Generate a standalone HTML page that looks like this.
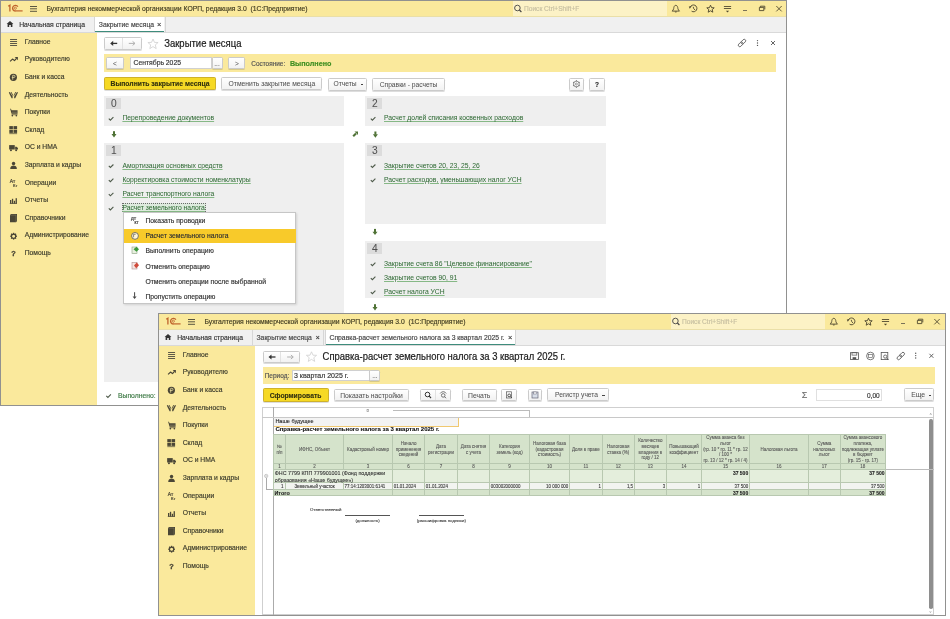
<!DOCTYPE html><html><head><meta charset="utf-8"><style>
html,body{margin:0;padding:0;background:#fff;width:950px;height:619px;overflow:hidden;position:relative;font-family:"Liberation Sans",sans-serif;}
.t{position:absolute;white-space:nowrap;line-height:1;-webkit-text-stroke:0.16px currentColor;}
.r{position:absolute;}
svg{overflow:visible;}
u{text-decoration:underline;text-underline-offset:1px;text-decoration-thickness:0.7px;text-decoration-color:#86B886;-webkit-text-stroke:0.02px currentColor;}
#root{position:absolute;left:0;top:0;width:950px;height:619px;will-change:transform;}
</style></head><body><div id="root">
<div class="r" style="left:0.00px;top:0.00px;width:787.00px;height:406.00px;background:#FFFFFF;border:1px solid #919190;box-sizing:border-box;"></div>
<div class="r" style="left:1.00px;top:1.00px;width:785.00px;height:15.50px;background:#FAE99C;"></div>
<div class="r" style="left:1.00px;top:16.00px;width:785.00px;height:1.00px;background:#EADFA8;"></div>
<div class="r" style="left:1.00px;top:17.00px;width:785.00px;height:15.00px;background:#F0F0F0;"></div>
<div class="r" style="left:1.00px;top:32.00px;width:785.00px;height:1.00px;background:#D9D9D9;"></div>
<div class="r" style="left:512.50px;top:1.00px;width:154.00px;height:15.00px;background:#FCF2C6;"></div>
<svg class="r" style="left:0.00px;top:0.00px;" width="26" height="16" viewBox="0 0 26 16"><g fill="none" stroke="#BF632C" stroke-width="1.3"><path d="M8.2 6.2 L9.9 5.1 V11.6"/><path d="M17.9 6.6 A2.9 2.9 0 1 0 15.3 11.1"/><path d="M15 10.9 H22.6" stroke-width="1.2"/><circle cx="15.3" cy="8.2" r="1.1" stroke-width="0.8"/></g></svg>
<svg class="r" style="left:0.00px;top:0.00px;" width="40" height="16" viewBox="0 0 40 16"><g fill="#5A5640"><rect x="30" y="6" width="7" height="1"/><rect x="30" y="8.3" width="7" height="1"/><rect x="30" y="10.8" width="7" height="1"/></g></svg>
<div class="t" style="left:46.50px;top:5.86px;font-size:6.8px;color:#423D22;">Бухгалтерия некоммерческой организации КОРП, редакция 3.0&nbsp;&nbsp;(1С:Предприятие)</div>
<svg class="r" style="left:512.00px;top:2.00px;" width="12" height="12" viewBox="0 0 12 12"><g transform="translate(6.00 6.60)"><circle cx="-0.6" cy="-0.6" r="2.8" fill="none" stroke="#444" stroke-width="0.9"/><path d="M1.4 1.4 L3.4 3.4" stroke="#444" stroke-width="1.1"/></g></svg>
<div class="t" style="left:524.00px;top:5.97px;font-size:6.6px;color:#C8C1A2;">Поиск Ctrl+Shift+F</div>
<svg class="r" style="left:669.00px;top:2.00px;" width="12" height="12" viewBox="0 0 12 12"><g transform="translate(6.80 6.80)"><path d="M0 -3.5 C-1.5 -3.5 -2 -1.6 -2.1 -0.2 C-2.3 1 -3 1.7 -3.7 2.3 H3.7 C3 1.7 2.3 1 2.1 -0.2 C2 -1.6 1.5 -3.5 0 -3.5 Z" fill="none" stroke="#514A30" stroke-width="0.9" stroke-linejoin="round"/><path d="M-1.1 2.6 A1.1 1.1 0 0 0 1.1 2.6 Z" fill="#514A30"/></g></svg>
<svg class="r" style="left:687.00px;top:2.00px;" width="12" height="12" viewBox="0 0 12 12"><g transform="translate(6.40 6.60)"><path d="M-3.1 -1.4 A3.4 3.4 0 1 1 -1.8 2.6" fill="none" stroke="#514A30" stroke-width="0.95"/><path d="M-4.6 -2 L-1.9 -2.4 L-3.6 0.2 Z" fill="#514A30"/><path d="M-0.2 -1.8 L0.4 0.2 L1.6 1.4" fill="none" stroke="#514A30" stroke-width="0.9"/></g></svg>
<svg class="r" style="left:704.00px;top:2.00px;" width="12" height="12" viewBox="0 0 12 12"><g transform="translate(6.50 6.80)"><path d="M0 -3.6 L1.1 -1.1 L3.7 -1 L1.7 0.8 L2.3 3.4 L0 2 L-2.3 3.4 L-1.7 0.8 L-3.7 -1 L-1.1 -1.1 Z" fill="none" stroke="#514A30" stroke-width="0.95" stroke-linejoin="round"/></g></svg>
<svg class="r" style="left:721.00px;top:2.00px;" width="12" height="12" viewBox="0 0 12 12"><g transform="translate(6.50 6.00)"><g fill="#514A30"><rect x="-3.6" y="-2" width="7.2" height="0.9"/><rect x="-3.6" y="0" width="7.2" height="0.9"/><path d="M-1.6 2.8 H1.6 L0 4.4 Z"/></g></g></svg>
<div class="r" style="left:742.80px;top:10.00px;width:4.40px;height:1.00px;background:#7A7258;"></div>
<svg class="r" style="left:756.00px;top:2.00px;" width="12" height="12" viewBox="0 0 12 12"><g transform="translate(6.00 6.40)"><path d="M-2.6 -1 H1.8 V2.2 H-2.6 Z M-1.6 -1 V-2.2 H2.8 V1" fill="none" stroke="#514A30" stroke-width="0.9"/></g></svg>
<svg class="r" style="left:773.00px;top:2.00px;" width="12" height="12" viewBox="0 0 12 12"><g transform="translate(6.00 6.70)"><path d="M-2.7 -2.7 L2.7 2.7 M2.7 -2.7 L-2.7 2.7" stroke="#514A30" stroke-width="0.9"/></g></svg>
<svg class="r" style="left:4.00px;top:18.00px;" width="12" height="12" viewBox="0 0 12 12"><g transform="translate(6.00 6.00)"><path d="M-3.4 0 L0 -3 L3.4 0 H2.4 V3 H0.8 V1 H-0.8 V3 H-2.4 V0 Z" fill="#333"/></g></svg>
<div class="t" style="left:19.20px;top:21.76px;font-size:6.8px;color:#333;">Начальная страница</div>
<div class="r" style="left:93.80px;top:17.00px;width:1.00px;height:15.00px;background:#D6D6D6;"></div>
<div class="r" style="left:94.80px;top:17.00px;width:69.70px;height:15.00px;background:#FFFFFF;"></div>
<div class="r" style="left:94.80px;top:31.00px;width:69.70px;height:1.20px;background:#3E8C7C;"></div>
<div class="t" style="left:98.80px;top:21.76px;font-size:6.8px;color:#444;">Закрытие месяца</div>
<div class="t" style="left:157.10px;top:21.11px;font-size:7.4px;color:#333;">×</div>
<div class="r" style="left:164.50px;top:17.00px;width:1.00px;height:15.00px;background:#D6D6D6;"></div>
<div class="r" style="left:1.00px;top:33.00px;width:96.00px;height:372.00px;background:#FAE99C;"></div>
<div class="t" style="left:24.70px;top:38.89px;font-size:6.75px;color:#3C3C2C;">Главное</div>
<svg class="r" style="left:7.00px;top:36.00px;" width="12" height="12" viewBox="0 0 12 12"><g transform="translate(6.55 6.00)"><g fill="#5E5A48"><rect x="-3.5" y="-3" width="7" height="1"/><rect x="-3.5" y="-1" width="7" height="1"/><rect x="-3.5" y="1" width="7" height="1"/><rect x="-3.5" y="3" width="7" height="1"/></g></g></svg>
<div class="t" style="left:24.70px;top:56.49px;font-size:6.75px;color:#3C3C2C;">Руководителю</div>
<svg class="r" style="left:7.00px;top:53.00px;" width="12" height="12" viewBox="0 0 12 12"><g transform="translate(6.90 6.45)"><g stroke="#4A4636" stroke-width="1.2" fill="none" stroke-linejoin="round"><path d="M-3.8 2 L-1.4 -0.4 L0.6 1.2 L2.6 -1"/></g><path d="M0.8 -2.4 L4 -2.4 L4 0.8 Z" fill="#4A4636"/></g></svg>
<div class="t" style="left:24.70px;top:74.09px;font-size:6.75px;color:#3C3C2C;">Банк и касса</div>
<svg class="r" style="left:7.00px;top:71.00px;" width="12" height="12" viewBox="0 0 12 12"><g transform="translate(6.40 6.30)"><circle r="3.6" fill="#4A4636"/><g stroke="#E8DCA0" stroke-width="0.8" fill="none"><path d="M-0.7 2.4 V-2 H0.5 A1.1 1.1 0 0 1 0.5 0.2 H-1.6"/></g></g></svg>
<div class="t" style="left:24.70px;top:91.69px;font-size:6.75px;color:#3C3C2C;">Деятельность</div>
<svg class="r" style="left:7.00px;top:89.00px;" width="12" height="12" viewBox="0 0 12 12"><g transform="translate(6.40 6.20)"><g fill="#4A4636"><path d="M-4.6 -2.8 L-3.6 -3.2 L-0.8 1.4 L-0.8 3 L-1.8 3 Z"/><path d="M4.6 -2.8 L3.6 -3.2 L0.8 1.4 L0.8 3 L1.8 3 Z"/><path d="M-2.8 -3 L-2 -3.2 L-0.2 0 L-0.6 0.8 Z"/><path d="M2.8 -3 L2 -3.2 L0.2 0 L0.6 0.8 Z"/></g></g></svg>
<div class="t" style="left:24.70px;top:109.28px;font-size:6.75px;color:#3C3C2C;">Покупки</div>
<svg class="r" style="left:7.00px;top:106.00px;" width="12" height="12" viewBox="0 0 12 12"><g transform="translate(6.95 6.45)"><g fill="#4A4636"><path d="M-3.8 -3.6 L-3 -3.6 L-2.4 -2.2 H3.6 V1.4 H-2.4 Z"/><rect x="-2.4" y="2" width="6" height="0.7"/><circle cx="-1.6" cy="3.2" r="0.8"/><circle cx="2.4" cy="3.2" r="0.8"/></g><rect x="-2" y="-0.6" width="5.4" height="0.5" fill="#E8DCA0" opacity="0.6"/></g></svg>
<div class="t" style="left:24.70px;top:126.88px;font-size:6.75px;color:#3C3C2C;">Склад</div>
<svg class="r" style="left:7.00px;top:124.00px;" width="12" height="12" viewBox="0 0 12 12"><g transform="translate(6.20 6.00)"><g fill="#4A4636"><rect x="-3.9" y="-3.9" width="3.6" height="3.1"/><rect x="0.3" y="-3.9" width="3.6" height="3.1"/><rect x="-3.9" y="-0.2" width="3.6" height="3.1"/><rect x="0.3" y="-0.2" width="3.6" height="3.1"/><rect x="-3.9" y="3.4" width="7.8" height="0.7"/></g></g></svg>
<div class="t" style="left:24.70px;top:144.49px;font-size:6.75px;color:#3C3C2C;">ОС и НМА</div>
<svg class="r" style="left:7.00px;top:142.00px;" width="12" height="12" viewBox="0 0 12 12"><g transform="translate(6.55 6.10)"><g fill="#4A4636"><rect x="-4.4" y="-3" width="5.6" height="4.4"/><path d="M1.6 -1.4 H3 L4.4 0 V1.4 H1.6 Z"/><circle cx="-2.6" cy="2.2" r="1"/><circle cx="2.6" cy="2.2" r="1"/></g></g></svg>
<div class="t" style="left:24.70px;top:162.09px;font-size:6.75px;color:#3C3C2C;">Зарплата и кадры</div>
<svg class="r" style="left:7.00px;top:159.00px;" width="12" height="12" viewBox="0 0 12 12"><g transform="translate(6.55 6.50)"><g fill="#4A4636"><ellipse cx="0" cy="-1.9" rx="1.7" ry="1.8"/><path d="M-3.3 3.6 C-3.3 0.7 -1.6 0.3 0 0.3 C1.6 0.3 3.3 0.7 3.3 3.6 Z"/></g></g></svg>
<div class="t" style="left:24.70px;top:179.69px;font-size:6.75px;color:#3C3C2C;">Операции</div>
<svg class="r" style="left:7.00px;top:176.00px;" width="12" height="12" viewBox="0 0 12 12"><g transform="translate(6.30 6.70)"><text x="-3.6" y="0.2" font-size="5" fill="#4A4636" font-family="Liberation Sans" stroke="#4A4636" stroke-width="0.2">Ат</text><text x="-0.2" y="4.2" font-size="4.2" fill="#4A4636" font-family="Liberation Sans" stroke="#4A4636" stroke-width="0.2">Кт</text></g></svg>
<div class="t" style="left:24.70px;top:197.28px;font-size:6.75px;color:#3C3C2C;">Отчеты</div>
<svg class="r" style="left:7.00px;top:195.00px;" width="12" height="12" viewBox="0 0 12 12"><g transform="translate(6.40 6.00)"><g fill="#4A4636"><rect x="-3.4" y="-1" width="1.3" height="3.6"/><rect x="-1.5" y="-2.2" width="1.3" height="4.8"/><rect x="0.4" y="-0.2" width="1.3" height="2.8"/><rect x="2.2" y="-2.8" width="1.3" height="5.4"/><rect x="-3.6" y="2.3" width="7.2" height="0.7"/></g></g></svg>
<div class="t" style="left:24.70px;top:214.88px;font-size:6.75px;color:#3C3C2C;">Справочники</div>
<svg class="r" style="left:7.00px;top:212.00px;" width="12" height="12" viewBox="0 0 12 12"><g transform="translate(6.40 6.10)"><g fill="#4A4636"><path d="M-3.4 -3 L-2.4 -4 H3.6 V3.2 L2.6 4.2 H-3.4 Z"/></g><path d="M-3.4 -3 H2.6 V4.2" stroke="#E8DCA0" stroke-width="0.4" fill="none" opacity="0.5"/></g></svg>
<div class="t" style="left:24.70px;top:232.49px;font-size:6.75px;color:#3C3C2C;">Администрирование</div>
<svg class="r" style="left:7.00px;top:230.00px;" width="12" height="12" viewBox="0 0 12 12"><g transform="translate(6.60 6.20)"><g fill="#4A4636"><rect x="-0.65" y="-3.4" width="1.3" height="1.6" transform="rotate(0)"/><rect x="-0.65" y="-3.4" width="1.3" height="1.6" transform="rotate(45)"/><rect x="-0.65" y="-3.4" width="1.3" height="1.6" transform="rotate(90)"/><rect x="-0.65" y="-3.4" width="1.3" height="1.6" transform="rotate(135)"/><rect x="-0.65" y="-3.4" width="1.3" height="1.6" transform="rotate(180)"/><rect x="-0.65" y="-3.4" width="1.3" height="1.6" transform="rotate(225)"/><rect x="-0.65" y="-3.4" width="1.3" height="1.6" transform="rotate(270)"/><rect x="-0.65" y="-3.4" width="1.3" height="1.6" transform="rotate(315)"/></g><circle r="2.1" fill="none" stroke="#4A4636" stroke-width="1.1"/></g></svg>
<div class="t" style="left:24.70px;top:250.09px;font-size:6.75px;color:#3C3C2C;">Помощь</div>
<svg class="r" style="left:7.00px;top:247.00px;" width="12" height="12" viewBox="0 0 12 12"><g transform="translate(6.60 6.20)"><text x="0" y="2.6" text-anchor="middle" font-size="7.4" font-weight="bold" fill="#4A4636" font-family="Liberation Sans" stroke="#4A4636" stroke-width="0.3">?</text></g></svg>
<svg class="r" style="left:736.00px;top:37.00px;" width="12" height="12" viewBox="0 0 12 12"><g transform="translate(6.00 6.00)"><g transform="rotate(-45)" fill="none" stroke="#5A5A5A" stroke-width="0.85"><rect x="-4.6" y="-1.5" width="5.4" height="3" rx="1.5"/><rect x="-0.8" y="-1.5" width="5.4" height="3" rx="1.5"/></g></g></svg>
<svg class="r" style="left:751.00px;top:37.00px;" width="12" height="12" viewBox="0 0 12 12"><g transform="translate(6.50 6.00)"><g fill="#555"><circle cy="-2.4" r="0.7"/><circle cy="0" r="0.7"/><circle cy="2.4" r="0.7"/></g></g></svg>
<svg class="r" style="left:767.00px;top:37.00px;" width="12" height="12" viewBox="0 0 12 12"><g transform="translate(6.00 6.00)"><path d="M-2.0 -2.0 L2.0 2.0 M2.0 -2.0 L-2.0 2.0" stroke="#555" stroke-width="0.9"/></g></svg>
<div class="r" style="left:104.20px;top:37.20px;width:37.50px;height:12.50px;background:linear-gradient(#FFFFFF,#F2F2F2);border:1px solid #CBCBCB;box-sizing:border-box;border-radius:1.5px;box-shadow:0 0.8px 0.6px rgba(0,0,0,0.18);"></div>
<div class="r" style="left:122.00px;top:38.20px;width:0.80px;height:10.50px;background:#E2E2E2;"></div>
<svg class="r" style="left:107.00px;top:37.00px;" width="12" height="12" viewBox="0 0 12 12"><g transform="translate(6.80 6.40)"><path d="M3.4 0 H-2" stroke="#333" stroke-width="1.3"/><path d="M-3.6 0 L-0.6 -2.6 V2.6 Z" fill="#333"/></g></svg>
<svg class="r" style="left:126.00px;top:37.00px;" width="12" height="12" viewBox="0 0 12 12"><g transform="translate(6.20 6.40)"><path d="M-3.4 0 H2.4 M0.4 -2 L2.8 0 L0.4 2" stroke="#A8A8A8" stroke-width="0.9" fill="none"/></g></svg>
<svg class="r" style="left:147.00px;top:38.00px;" width="12" height="12" viewBox="0 0 12 12"><g transform="translate(6.00 6.00)"><path d="M0 -5 L1.5 -1.6 L5.1 -1.5 L2.3 0.9 L3.2 4.6 L0 2.6 L-3.2 4.6 L-2.3 0.9 L-5.1 -1.5 L-1.5 -1.6 Z" fill="none" stroke="#CFCFCF" stroke-width="0.8" stroke-linejoin="round"/></g></svg>
<div class="t" style="left:164.20px;top:38.76px;font-size:9.5px;color:#1A1A1A;-webkit-text-stroke:0.18px currentColor;transform:scaleY(1.14);transform-origin:0 8.04px;">Закрытие месяца</div>
<div class="r" style="left:104.00px;top:54.00px;width:672.00px;height:18.00px;background:#FAE99C;"></div>
<div class="r" style="left:106.00px;top:57.20px;width:18.00px;height:12.00px;background:linear-gradient(#FFFFFF,#F2F2F2);border:1px solid #CBCBCB;box-sizing:border-box;border-radius:1.5px;box-shadow:0 0.8px 0.6px rgba(0,0,0,0.18);"></div>
<div class="t" style="left:106.00px;top:60.93px;width:18.00px;text-align:center;font-size:6.5px;color:#505050;-webkit-text-stroke:0.03px currentColor;">&lt;</div>
<div class="r" style="left:130.00px;top:57.20px;width:82.00px;height:12.00px;background:#FFFFFF;border:1px solid #D0D0D0;box-sizing:border-box;"></div>
<div class="t" style="left:133.50px;top:60.46px;font-size:6.8px;color:#333;">Сентябрь 2025</div>
<div class="r" style="left:211.50px;top:57.20px;width:11.00px;height:12.00px;background:linear-gradient(#FFFFFF,#F2F2F2);border:1px solid #CBCBCB;box-sizing:border-box;border-radius:1.5px;box-shadow:0 0.8px 0.6px rgba(0,0,0,0.18);"></div>
<div class="t" style="left:211.50px;top:60.93px;width:11.00px;text-align:center;font-size:6.5px;color:#505050;-webkit-text-stroke:0.03px currentColor;">...</div>
<div class="r" style="left:228.30px;top:57.20px;width:17.20px;height:12.00px;background:linear-gradient(#FFFFFF,#F2F2F2);border:1px solid #CBCBCB;box-sizing:border-box;border-radius:1.5px;box-shadow:0 0.8px 0.6px rgba(0,0,0,0.18);"></div>
<div class="t" style="left:228.30px;top:60.93px;width:17.20px;text-align:center;font-size:6.5px;color:#505050;-webkit-text-stroke:0.03px currentColor;">&gt;</div>
<div class="t" style="left:251.30px;top:60.66px;font-size:6.45px;color:#555;">Состояние:</div>
<div class="t" style="left:289.90px;top:60.22px;font-size:7.2px;color:#3F8F22;font-weight:bold;">Выполнено</div>
<div class="r" style="left:104.00px;top:77.20px;width:112.00px;height:13.00px;background:#F6D925;border:1px solid #CFB22A;box-sizing:border-box;border-radius:1.5px;box-shadow:0 0.8px 0.6px rgba(0,0,0,0.18);"></div>
<div class="t" style="left:104.00px;top:81.26px;width:112.00px;text-align:center;font-size:6.8px;color:#33320F;-webkit-text-stroke:0.12px currentColor;font-weight:bold;">Выполнить закрытие месяца</div>
<div class="r" style="left:221.40px;top:77.30px;width:101.00px;height:12.80px;background:linear-gradient(#FFFFFF,#F2F2F2);border:1px solid #CBCBCB;box-sizing:border-box;border-radius:1.5px;box-shadow:0 0.8px 0.6px rgba(0,0,0,0.18);"></div>
<div class="t" style="left:221.40px;top:81.28px;width:101.00px;text-align:center;font-size:6.76px;color:#505050;-webkit-text-stroke:0.03px currentColor;">Отменить закрытие месяца</div>
<div class="r" style="left:327.50px;top:77.80px;width:39.00px;height:12.80px;background:linear-gradient(#FFFFFF,#F2F2F2);border:1px solid #CBCBCB;box-sizing:border-box;border-radius:1.5px;box-shadow:0 0.8px 0.6px rgba(0,0,0,0.18);"></div>
<div class="t" style="left:333.50px;top:81.21px;font-size:6.7px;color:#505050;-webkit-text-stroke:0.03px currentColor;">Отчеты</div>
<div class="r" style="left:361.00px;top:84.20px;width:2.40px;height:0.90px;background:#444;"></div>
<div class="r" style="left:372.00px;top:78.00px;width:73.00px;height:12.50px;background:linear-gradient(#FFFFFF,#F2F2F2);border:1px solid #CBCBCB;box-sizing:border-box;border-radius:1.5px;box-shadow:0 0.8px 0.6px rgba(0,0,0,0.18);"></div>
<div class="t" style="left:372.00px;top:81.86px;width:73.00px;text-align:center;font-size:6.7px;color:#505050;-webkit-text-stroke:0.03px currentColor;">Справки - расчеты</div>
<div class="r" style="left:568.50px;top:77.50px;width:15.80px;height:13.00px;background:linear-gradient(#FFFFFF,#F2F2F2);border:1px solid #CBCBCB;box-sizing:border-box;border-radius:1.5px;box-shadow:0 0.8px 0.6px rgba(0,0,0,0.18);"></div>
<svg class="r" style="left:570.00px;top:78.00px;" width="12" height="12" viewBox="0 0 12 12"><g transform="translate(6.40 6.00)"><circle r="2.9" fill="none" stroke="#777" stroke-width="0.8"/><circle r="1" fill="none" stroke="#777" stroke-width="0.7"/><rect x="-0.5" y="-3.8" width="1" height="1.2" fill="#777" transform="rotate(0)"/><rect x="-0.5" y="-3.8" width="1" height="1.2" fill="#777" transform="rotate(60)"/><rect x="-0.5" y="-3.8" width="1" height="1.2" fill="#777" transform="rotate(120)"/><rect x="-0.5" y="-3.8" width="1" height="1.2" fill="#777" transform="rotate(180)"/><rect x="-0.5" y="-3.8" width="1" height="1.2" fill="#777" transform="rotate(240)"/><rect x="-0.5" y="-3.8" width="1" height="1.2" fill="#777" transform="rotate(300)"/></g></svg>
<div class="r" style="left:589.30px;top:77.50px;width:15.60px;height:13.00px;background:linear-gradient(#FFFFFF,#F2F2F2);border:1px solid #CBCBCB;box-sizing:border-box;border-radius:1.5px;box-shadow:0 0.8px 0.6px rgba(0,0,0,0.18);"></div>
<div class="t" style="left:589.30px;top:81.73px;width:15.60px;text-align:center;font-size:6.5px;color:#222;-webkit-text-stroke:0.12px currentColor;font-weight:bold;">?</div>
<div class="r" style="left:104.10px;top:96.10px;width:240.10px;height:29.80px;background:#EFEFEF;"></div>
<div class="r" style="left:106.10px;top:97.90px;width:15.20px;height:11.40px;background:#DCDCDC;"></div>
<div class="t" style="left:110.90px;top:98.97px;font-size:10.2px;color:#505050;-webkit-text-stroke:0.05px currentColor;">0</div>
<svg class="r" style="left:105.00px;top:112.00px;" width="12" height="12" viewBox="0 0 12 12"><g transform="translate(6.00 6.80)"><path d="M-2.2 -0.2 L-0.6 1.4 L2.4 -1.6" fill="none" stroke="#4E5A4A" stroke-width="1.1"/></g></svg>
<div class="t" style="left:122.40px;top:115.28px;font-size:6.75px;color:#2F6A34;"><u>Перепроведение документов</u></div>
<svg class="r" style="left:108.00px;top:128.00px;" width="12" height="12" viewBox="0 0 12 12"><g transform="translate(6.00 6.30)"><rect x="-1" y="-3.1" width="2" height="3.2" fill="#4F7236"/><path d="M-2.5 -0.3 H2.5 L0 3.1 Z" fill="#4F7236"/></g></svg>
<div class="r" style="left:104.10px;top:143.30px;width:240.10px;height:238.90px;background:#EFEFEF;"></div>
<div class="r" style="left:106.10px;top:145.10px;width:15.20px;height:11.40px;background:#DCDCDC;"></div>
<div class="t" style="left:110.90px;top:146.17px;font-size:10.2px;color:#505050;-webkit-text-stroke:0.05px currentColor;">1</div>
<div class="r" style="left:122.20px;top:203.00px;width:83.60px;height:8.80px;background:#DDEBDD;border:0.7px dotted #6A6A6A;box-sizing:border-box;"></div>
<svg class="r" style="left:105.00px;top:160.00px;" width="12" height="12" viewBox="0 0 12 12"><g transform="translate(6.00 6.10)"><path d="M-2.2 -0.2 L-0.6 1.4 L2.4 -1.6" fill="none" stroke="#4E5A4A" stroke-width="1.1"/></g></svg>
<div class="t" style="left:122.40px;top:162.59px;font-size:6.75px;color:#2F6A34;"><u>Амортизация основных средств</u></div>
<svg class="r" style="left:105.00px;top:174.00px;" width="12" height="12" viewBox="0 0 12 12"><g transform="translate(6.00 6.25)"><path d="M-2.2 -0.2 L-0.6 1.4 L2.4 -1.6" fill="none" stroke="#4E5A4A" stroke-width="1.1"/></g></svg>
<div class="t" style="left:122.40px;top:176.74px;font-size:6.75px;color:#2F6A34;"><u>Корректировка стоимости номенклатуры</u></div>
<svg class="r" style="left:105.00px;top:188.00px;" width="12" height="12" viewBox="0 0 12 12"><g transform="translate(6.00 6.40)"><path d="M-2.2 -0.2 L-0.6 1.4 L2.4 -1.6" fill="none" stroke="#4E5A4A" stroke-width="1.1"/></g></svg>
<div class="t" style="left:122.40px;top:190.89px;font-size:6.75px;color:#2F6A34;"><u>Расчет транспортного налога</u></div>
<svg class="r" style="left:105.00px;top:202.00px;" width="12" height="12" viewBox="0 0 12 12"><g transform="translate(6.00 6.55)"><path d="M-2.2 -0.2 L-0.6 1.4 L2.4 -1.6" fill="none" stroke="#4E5A4A" stroke-width="1.1"/></g></svg>
<div class="t" style="left:122.40px;top:205.03px;font-size:6.75px;color:#2F6A34;"><u>Расчет земельного налога</u></div>
<div class="r" style="left:365.20px;top:96.20px;width:240.60px;height:29.70px;background:#EFEFEF;"></div>
<div class="r" style="left:367.20px;top:98.00px;width:15.20px;height:11.40px;background:#DCDCDC;"></div>
<div class="t" style="left:372.00px;top:99.07px;font-size:10.2px;color:#505050;-webkit-text-stroke:0.05px currentColor;">2</div>
<svg class="r" style="left:367.00px;top:112.00px;" width="12" height="12" viewBox="0 0 12 12"><g transform="translate(6.00 6.80)"><path d="M-2.2 -0.2 L-0.6 1.4 L2.4 -1.6" fill="none" stroke="#4E5A4A" stroke-width="1.1"/></g></svg>
<div class="t" style="left:384.00px;top:115.28px;font-size:6.75px;color:#2F6A34;"><u>Расчет долей списания косвенных расходов</u></div>
<svg class="r" style="left:349.00px;top:128.00px;" width="12" height="12" viewBox="0 0 12 12"><g transform="translate(6.40 6.00)"><path d="M-2.2 2.2 L0.6 -0.6" stroke="#4F7236" stroke-width="2.1"/><path d="M-0.9 -2.6 H2.6 V0.9 Z" fill="#4F7236"/></g></svg>
<svg class="r" style="left:369.00px;top:128.00px;" width="12" height="12" viewBox="0 0 12 12"><g transform="translate(6.40 6.60)"><rect x="-1" y="-3.1" width="2" height="3.2" fill="#4F7236"/><path d="M-2.5 -0.3 H2.5 L0 3.1 Z" fill="#4F7236"/></g></svg>
<div class="r" style="left:365.20px;top:143.30px;width:240.60px;height:80.40px;background:#EFEFEF;"></div>
<div class="r" style="left:367.20px;top:145.10px;width:15.20px;height:11.40px;background:#DCDCDC;"></div>
<div class="t" style="left:372.00px;top:146.17px;font-size:10.2px;color:#505050;-webkit-text-stroke:0.05px currentColor;">3</div>
<svg class="r" style="left:367.00px;top:160.00px;" width="12" height="12" viewBox="0 0 12 12"><g transform="translate(6.00 6.10)"><path d="M-2.2 -0.2 L-0.6 1.4 L2.4 -1.6" fill="none" stroke="#4E5A4A" stroke-width="1.1"/></g></svg>
<div class="t" style="left:384.00px;top:162.59px;font-size:6.75px;color:#2F6A34;"><u>Закрытие счетов 20, 23, 25, 26</u></div>
<svg class="r" style="left:367.00px;top:174.00px;" width="12" height="12" viewBox="0 0 12 12"><g transform="translate(6.00 6.25)"><path d="M-2.2 -0.2 L-0.6 1.4 L2.4 -1.6" fill="none" stroke="#4E5A4A" stroke-width="1.1"/></g></svg>
<div class="t" style="left:384.00px;top:176.74px;font-size:6.75px;color:#2F6A34;"><u>Расчет расходов, уменьшающих налог УСН</u></div>
<svg class="r" style="left:369.00px;top:226.00px;" width="12" height="12" viewBox="0 0 12 12"><g transform="translate(6.00 6.00)"><rect x="-1" y="-3.1" width="2" height="3.2" fill="#4F7236"/><path d="M-2.5 -0.3 H2.5 L0 3.1 Z" fill="#4F7236"/></g></svg>
<div class="r" style="left:365.20px;top:241.20px;width:240.60px;height:57.30px;background:#EFEFEF;"></div>
<div class="r" style="left:367.20px;top:243.00px;width:15.20px;height:11.40px;background:#DCDCDC;"></div>
<div class="t" style="left:372.00px;top:244.07px;font-size:10.2px;color:#505050;-webkit-text-stroke:0.05px currentColor;">4</div>
<svg class="r" style="left:367.00px;top:258.00px;" width="12" height="12" viewBox="0 0 12 12"><g transform="translate(6.00 6.30)"><path d="M-2.2 -0.2 L-0.6 1.4 L2.4 -1.6" fill="none" stroke="#4E5A4A" stroke-width="1.1"/></g></svg>
<div class="t" style="left:384.00px;top:260.78px;font-size:6.75px;color:#2F6A34;"><u>Закрытие счета 86 "Целевое финансирование"</u></div>
<svg class="r" style="left:367.00px;top:272.00px;" width="12" height="12" viewBox="0 0 12 12"><g transform="translate(6.00 6.30)"><path d="M-2.2 -0.2 L-0.6 1.4 L2.4 -1.6" fill="none" stroke="#4E5A4A" stroke-width="1.1"/></g></svg>
<div class="t" style="left:384.00px;top:274.78px;font-size:6.75px;color:#2F6A34;"><u>Закрытие счетов 90, 91</u></div>
<svg class="r" style="left:367.00px;top:286.00px;" width="12" height="12" viewBox="0 0 12 12"><g transform="translate(6.00 6.30)"><path d="M-2.2 -0.2 L-0.6 1.4 L2.4 -1.6" fill="none" stroke="#4E5A4A" stroke-width="1.1"/></g></svg>
<div class="t" style="left:384.00px;top:288.78px;font-size:6.75px;color:#2F6A34;"><u>Расчет налога УСН</u></div>
<svg class="r" style="left:369.00px;top:301.00px;" width="12" height="12" viewBox="0 0 12 12"><g transform="translate(6.00 6.30)"><rect x="-1" y="-3.1" width="2" height="3.2" fill="#4F7236"/><path d="M-2.5 -0.3 H2.5 L0 3.1 Z" fill="#4F7236"/></g></svg>
<svg class="r" style="left:102.00px;top:390.00px;" width="12" height="12" viewBox="0 0 12 12"><g transform="translate(6.50 6.00)"><path d="M-2.2 -0.2 L-0.6 1.4 L2.4 -1.6" fill="none" stroke="#4E5A4A" stroke-width="1.1"/></g></svg>
<div class="t" style="left:118.00px;top:392.66px;font-size:6.8px;color:#3E7A46;">Выполнено:</div>
<div class="r" style="left:122.60px;top:212.40px;width:173.70px;height:91.60px;background:#FFFFFF;border:1px solid #C6C6C6;box-sizing:border-box;box-shadow:1px 1px 2px rgba(0,0,0,0.12);"></div>
<div class="r" style="left:123.50px;top:228.60px;width:172.00px;height:14.40px;background:#F8CA2A;"></div>
<div class="t" style="left:145.40px;top:217.86px;font-size:6.8px;color:#333;">Показать проводки</div>
<div class="t" style="left:145.40px;top:233.11px;font-size:6.8px;color:#333;">Расчет земельного налога</div>
<div class="t" style="left:145.40px;top:248.36px;font-size:6.8px;color:#333;">Выполнить операцию</div>
<div class="t" style="left:145.40px;top:263.61px;font-size:6.8px;color:#333;">Отменить операцию</div>
<div class="t" style="left:145.40px;top:278.86px;font-size:6.8px;color:#333;">Отменить операции после выбранной</div>
<div class="t" style="left:145.40px;top:294.11px;font-size:6.8px;color:#333;">Пропустить операцию</div>
<svg class="r" style="left:129.00px;top:214.00px;" width="12" height="12" viewBox="0 0 12 12"><g transform="translate(6.00 6.60)"><text x="-4" y="-0.2" font-size="4" fill="#333" stroke="#333" stroke-width="0.2" font-family="Liberation Sans">ДТ</text><text x="-0.4" y="3.4" font-size="3.4" fill="#333" stroke="#333" stroke-width="0.2" font-family="Liberation Sans">КТ</text></g></svg>
<svg class="r" style="left:129.00px;top:229.00px;" width="12" height="12" viewBox="0 0 12 12"><g transform="translate(6.00 6.90)"><circle r="3.4" fill="#FFF6D8" stroke="#555" stroke-width="0.8"/><path d="M-1.4 1.4 V-1.6 H0.6" stroke="#555" stroke-width="0.7" fill="none"/></g></svg>
<svg class="r" style="left:129.00px;top:244.00px;" width="12" height="12" viewBox="0 0 12 12"><g transform="translate(6.00 6.20)"><rect x="-3" y="-3.2" width="5" height="6.6" fill="#E8F0E0" stroke="#8AA080" stroke-width="0.6"/><path d="M-1.5 -1 L1.5 -3.5 L4 -1 L1.5 1.5 Z" fill="#3C9A3C"/></g></svg>
<svg class="r" style="left:129.00px;top:259.00px;" width="12" height="12" viewBox="0 0 12 12"><g transform="translate(6.00 6.60)"><rect x="-3" y="-3.2" width="5" height="6.6" fill="#F6E4E0" stroke="#B09090" stroke-width="0.6"/><path d="M-1 0 L1.8 -3.2 L4 -0.4 L1.2 2.6 Z" fill="#D04A3A"/></g></svg>
<svg class="r" style="left:128.00px;top:289.00px;" width="12" height="12" viewBox="0 0 12 12"><g transform="translate(6.60 6.60)"><rect x="-0.5" y="-3.4" width="1" height="4.6" fill="#444"/><path d="M-2 0.8 H2 L0 3.4 Z" fill="#444"/></g></svg>
<div class="r" style="left:158.00px;top:313.00px;width:788.00px;height:303.00px;background:#FFFFFF;border:1px solid #919190;box-sizing:border-box;"></div>
<div class="r" style="left:159.00px;top:314.00px;width:786.00px;height:15.50px;background:#FAE99C;"></div>
<div class="r" style="left:159.00px;top:329.00px;width:786.00px;height:1.00px;background:#EADFA8;"></div>
<div class="r" style="left:159.00px;top:330.00px;width:786.00px;height:15.00px;background:#F0F0F0;"></div>
<div class="r" style="left:159.00px;top:345.00px;width:786.00px;height:1.00px;background:#D9D9D9;"></div>
<div class="r" style="left:670.50px;top:314.00px;width:154.00px;height:15.00px;background:#FCF2C6;"></div>
<svg class="r" style="left:158.00px;top:313.00px;" width="26" height="16" viewBox="0 0 26 16"><g fill="none" stroke="#BF632C" stroke-width="1.3"><path d="M8.2 6.2 L9.9 5.1 V11.6"/><path d="M17.9 6.6 A2.9 2.9 0 1 0 15.3 11.1"/><path d="M15 10.9 H22.6" stroke-width="1.2"/><circle cx="15.3" cy="8.2" r="1.1" stroke-width="0.8"/></g></svg>
<svg class="r" style="left:158.00px;top:313.00px;" width="40" height="16" viewBox="0 0 40 16"><g fill="#5A5640"><rect x="30" y="6" width="7" height="1"/><rect x="30" y="8.3" width="7" height="1"/><rect x="30" y="10.8" width="7" height="1"/></g></svg>
<div class="t" style="left:204.50px;top:318.86px;font-size:6.8px;color:#423D22;">Бухгалтерия некоммерческой организации КОРП, редакция 3.0&nbsp;&nbsp;(1С:Предприятие)</div>
<svg class="r" style="left:670.00px;top:315.00px;" width="12" height="12" viewBox="0 0 12 12"><g transform="translate(6.00 6.60)"><circle cx="-0.6" cy="-0.6" r="2.8" fill="none" stroke="#444" stroke-width="0.9"/><path d="M1.4 1.4 L3.4 3.4" stroke="#444" stroke-width="1.1"/></g></svg>
<div class="t" style="left:682.00px;top:318.97px;font-size:6.6px;color:#C8C1A2;">Поиск Ctrl+Shift+F</div>
<svg class="r" style="left:827.00px;top:315.00px;" width="12" height="12" viewBox="0 0 12 12"><g transform="translate(6.80 6.80)"><path d="M0 -3.5 C-1.5 -3.5 -2 -1.6 -2.1 -0.2 C-2.3 1 -3 1.7 -3.7 2.3 H3.7 C3 1.7 2.3 1 2.1 -0.2 C2 -1.6 1.5 -3.5 0 -3.5 Z" fill="none" stroke="#514A30" stroke-width="0.9" stroke-linejoin="round"/><path d="M-1.1 2.6 A1.1 1.1 0 0 0 1.1 2.6 Z" fill="#514A30"/></g></svg>
<svg class="r" style="left:845.00px;top:315.00px;" width="12" height="12" viewBox="0 0 12 12"><g transform="translate(6.40 6.60)"><path d="M-3.1 -1.4 A3.4 3.4 0 1 1 -1.8 2.6" fill="none" stroke="#514A30" stroke-width="0.95"/><path d="M-4.6 -2 L-1.9 -2.4 L-3.6 0.2 Z" fill="#514A30"/><path d="M-0.2 -1.8 L0.4 0.2 L1.6 1.4" fill="none" stroke="#514A30" stroke-width="0.9"/></g></svg>
<svg class="r" style="left:862.00px;top:315.00px;" width="12" height="12" viewBox="0 0 12 12"><g transform="translate(6.50 6.80)"><path d="M0 -3.6 L1.1 -1.1 L3.7 -1 L1.7 0.8 L2.3 3.4 L0 2 L-2.3 3.4 L-1.7 0.8 L-3.7 -1 L-1.1 -1.1 Z" fill="none" stroke="#514A30" stroke-width="0.95" stroke-linejoin="round"/></g></svg>
<svg class="r" style="left:879.00px;top:315.00px;" width="12" height="12" viewBox="0 0 12 12"><g transform="translate(6.50 6.00)"><g fill="#514A30"><rect x="-3.6" y="-2" width="7.2" height="0.9"/><rect x="-3.6" y="0" width="7.2" height="0.9"/><path d="M-1.6 2.8 H1.6 L0 4.4 Z"/></g></g></svg>
<div class="r" style="left:900.80px;top:323.00px;width:4.40px;height:1.00px;background:#7A7258;"></div>
<svg class="r" style="left:914.00px;top:315.00px;" width="12" height="12" viewBox="0 0 12 12"><g transform="translate(6.00 6.40)"><path d="M-2.6 -1 H1.8 V2.2 H-2.6 Z M-1.6 -1 V-2.2 H2.8 V1" fill="none" stroke="#514A30" stroke-width="0.9"/></g></svg>
<svg class="r" style="left:931.00px;top:315.00px;" width="12" height="12" viewBox="0 0 12 12"><g transform="translate(6.00 6.70)"><path d="M-2.7 -2.7 L2.7 2.7 M2.7 -2.7 L-2.7 2.7" stroke="#514A30" stroke-width="0.9"/></g></svg>
<svg class="r" style="left:162.00px;top:331.00px;" width="12" height="12" viewBox="0 0 12 12"><g transform="translate(6.00 6.00)"><path d="M-3.4 0 L0 -3 L3.4 0 H2.4 V3 H0.8 V1 H-0.8 V3 H-2.4 V0 Z" fill="#333"/></g></svg>
<div class="t" style="left:177.20px;top:334.76px;font-size:6.8px;color:#333;">Начальная страница</div>
<div class="r" style="left:251.50px;top:330.00px;width:1.00px;height:15.00px;background:#D6D6D6;"></div>
<div class="t" style="left:256.50px;top:334.76px;font-size:6.8px;color:#444;">Закрытие месяца</div>
<div class="t" style="left:315.60px;top:334.11px;font-size:7.4px;color:#333;">×</div>
<div class="r" style="left:323.00px;top:330.00px;width:1.00px;height:15.00px;background:#D6D6D6;"></div>
<div class="r" style="left:324.50px;top:330.00px;width:1.00px;height:15.00px;background:#D6D6D6;"></div>
<div class="r" style="left:325.50px;top:330.00px;width:189.80px;height:15.00px;background:#FFFFFF;"></div>
<div class="r" style="left:325.50px;top:344.00px;width:189.80px;height:1.20px;background:#3E8C7C;"></div>
<div class="t" style="left:329.50px;top:334.76px;font-size:6.8px;color:#444;">Справка-расчет земельного налога за 3 квартал 2025 г.</div>
<div class="t" style="left:507.90px;top:334.11px;font-size:7.4px;color:#333;">×</div>
<div class="r" style="left:515.30px;top:330.00px;width:1.00px;height:15.00px;background:#D6D6D6;"></div>
<div class="r" style="left:159.00px;top:346.00px;width:96.00px;height:269.00px;background:#FAE99C;"></div>
<div class="t" style="left:182.70px;top:351.88px;font-size:6.75px;color:#3C3C2C;">Главное</div>
<svg class="r" style="left:165.00px;top:349.00px;" width="12" height="12" viewBox="0 0 12 12"><g transform="translate(6.55 6.00)"><g fill="#5E5A48"><rect x="-3.5" y="-3" width="7" height="1"/><rect x="-3.5" y="-1" width="7" height="1"/><rect x="-3.5" y="1" width="7" height="1"/><rect x="-3.5" y="3" width="7" height="1"/></g></g></svg>
<div class="t" style="left:182.70px;top:369.48px;font-size:6.75px;color:#3C3C2C;">Руководителю</div>
<svg class="r" style="left:165.00px;top:366.00px;" width="12" height="12" viewBox="0 0 12 12"><g transform="translate(6.90 6.45)"><g stroke="#4A4636" stroke-width="1.2" fill="none" stroke-linejoin="round"><path d="M-3.8 2 L-1.4 -0.4 L0.6 1.2 L2.6 -1"/></g><path d="M0.8 -2.4 L4 -2.4 L4 0.8 Z" fill="#4A4636"/></g></svg>
<div class="t" style="left:182.70px;top:387.08px;font-size:6.75px;color:#3C3C2C;">Банк и касса</div>
<svg class="r" style="left:165.00px;top:384.00px;" width="12" height="12" viewBox="0 0 12 12"><g transform="translate(6.40 6.30)"><circle r="3.6" fill="#4A4636"/><g stroke="#E8DCA0" stroke-width="0.8" fill="none"><path d="M-0.7 2.4 V-2 H0.5 A1.1 1.1 0 0 1 0.5 0.2 H-1.6"/></g></g></svg>
<div class="t" style="left:182.70px;top:404.68px;font-size:6.75px;color:#3C3C2C;">Деятельность</div>
<svg class="r" style="left:165.00px;top:402.00px;" width="12" height="12" viewBox="0 0 12 12"><g transform="translate(6.40 6.20)"><g fill="#4A4636"><path d="M-4.6 -2.8 L-3.6 -3.2 L-0.8 1.4 L-0.8 3 L-1.8 3 Z"/><path d="M4.6 -2.8 L3.6 -3.2 L0.8 1.4 L0.8 3 L1.8 3 Z"/><path d="M-2.8 -3 L-2 -3.2 L-0.2 0 L-0.6 0.8 Z"/><path d="M2.8 -3 L2 -3.2 L0.2 0 L0.6 0.8 Z"/></g></g></svg>
<div class="t" style="left:182.70px;top:422.28px;font-size:6.75px;color:#3C3C2C;">Покупки</div>
<svg class="r" style="left:165.00px;top:419.00px;" width="12" height="12" viewBox="0 0 12 12"><g transform="translate(6.95 6.45)"><g fill="#4A4636"><path d="M-3.8 -3.6 L-3 -3.6 L-2.4 -2.2 H3.6 V1.4 H-2.4 Z"/><rect x="-2.4" y="2" width="6" height="0.7"/><circle cx="-1.6" cy="3.2" r="0.8"/><circle cx="2.4" cy="3.2" r="0.8"/></g><rect x="-2" y="-0.6" width="5.4" height="0.5" fill="#E8DCA0" opacity="0.6"/></g></svg>
<div class="t" style="left:182.70px;top:439.88px;font-size:6.75px;color:#3C3C2C;">Склад</div>
<svg class="r" style="left:165.00px;top:437.00px;" width="12" height="12" viewBox="0 0 12 12"><g transform="translate(6.20 6.00)"><g fill="#4A4636"><rect x="-3.9" y="-3.9" width="3.6" height="3.1"/><rect x="0.3" y="-3.9" width="3.6" height="3.1"/><rect x="-3.9" y="-0.2" width="3.6" height="3.1"/><rect x="0.3" y="-0.2" width="3.6" height="3.1"/><rect x="-3.9" y="3.4" width="7.8" height="0.7"/></g></g></svg>
<div class="t" style="left:182.70px;top:457.49px;font-size:6.75px;color:#3C3C2C;">ОС и НМА</div>
<svg class="r" style="left:165.00px;top:455.00px;" width="12" height="12" viewBox="0 0 12 12"><g transform="translate(6.55 6.10)"><g fill="#4A4636"><rect x="-4.4" y="-3" width="5.6" height="4.4"/><path d="M1.6 -1.4 H3 L4.4 0 V1.4 H1.6 Z"/><circle cx="-2.6" cy="2.2" r="1"/><circle cx="2.6" cy="2.2" r="1"/></g></g></svg>
<div class="t" style="left:182.70px;top:475.08px;font-size:6.75px;color:#3C3C2C;">Зарплата и кадры</div>
<svg class="r" style="left:165.00px;top:472.00px;" width="12" height="12" viewBox="0 0 12 12"><g transform="translate(6.55 6.50)"><g fill="#4A4636"><ellipse cx="0" cy="-1.9" rx="1.7" ry="1.8"/><path d="M-3.3 3.6 C-3.3 0.7 -1.6 0.3 0 0.3 C1.6 0.3 3.3 0.7 3.3 3.6 Z"/></g></g></svg>
<div class="t" style="left:182.70px;top:492.68px;font-size:6.75px;color:#3C3C2C;">Операции</div>
<svg class="r" style="left:165.00px;top:489.00px;" width="12" height="12" viewBox="0 0 12 12"><g transform="translate(6.30 6.70)"><text x="-3.6" y="0.2" font-size="5" fill="#4A4636" font-family="Liberation Sans" stroke="#4A4636" stroke-width="0.2">Ат</text><text x="-0.2" y="4.2" font-size="4.2" fill="#4A4636" font-family="Liberation Sans" stroke="#4A4636" stroke-width="0.2">Кт</text></g></svg>
<div class="t" style="left:182.70px;top:510.28px;font-size:6.75px;color:#3C3C2C;">Отчеты</div>
<svg class="r" style="left:165.00px;top:508.00px;" width="12" height="12" viewBox="0 0 12 12"><g transform="translate(6.40 6.00)"><g fill="#4A4636"><rect x="-3.4" y="-1" width="1.3" height="3.6"/><rect x="-1.5" y="-2.2" width="1.3" height="4.8"/><rect x="0.4" y="-0.2" width="1.3" height="2.8"/><rect x="2.2" y="-2.8" width="1.3" height="5.4"/><rect x="-3.6" y="2.3" width="7.2" height="0.7"/></g></g></svg>
<div class="t" style="left:182.70px;top:527.89px;font-size:6.75px;color:#3C3C2C;">Справочники</div>
<svg class="r" style="left:165.00px;top:525.00px;" width="12" height="12" viewBox="0 0 12 12"><g transform="translate(6.40 6.10)"><g fill="#4A4636"><path d="M-3.4 -3 L-2.4 -4 H3.6 V3.2 L2.6 4.2 H-3.4 Z"/></g><path d="M-3.4 -3 H2.6 V4.2" stroke="#E8DCA0" stroke-width="0.4" fill="none" opacity="0.5"/></g></svg>
<div class="t" style="left:182.70px;top:545.49px;font-size:6.75px;color:#3C3C2C;">Администрирование</div>
<svg class="r" style="left:165.00px;top:543.00px;" width="12" height="12" viewBox="0 0 12 12"><g transform="translate(6.60 6.20)"><g fill="#4A4636"><rect x="-0.65" y="-3.4" width="1.3" height="1.6" transform="rotate(0)"/><rect x="-0.65" y="-3.4" width="1.3" height="1.6" transform="rotate(45)"/><rect x="-0.65" y="-3.4" width="1.3" height="1.6" transform="rotate(90)"/><rect x="-0.65" y="-3.4" width="1.3" height="1.6" transform="rotate(135)"/><rect x="-0.65" y="-3.4" width="1.3" height="1.6" transform="rotate(180)"/><rect x="-0.65" y="-3.4" width="1.3" height="1.6" transform="rotate(225)"/><rect x="-0.65" y="-3.4" width="1.3" height="1.6" transform="rotate(270)"/><rect x="-0.65" y="-3.4" width="1.3" height="1.6" transform="rotate(315)"/></g><circle r="2.1" fill="none" stroke="#4A4636" stroke-width="1.1"/></g></svg>
<div class="t" style="left:182.70px;top:563.09px;font-size:6.75px;color:#3C3C2C;">Помощь</div>
<svg class="r" style="left:165.00px;top:560.00px;" width="12" height="12" viewBox="0 0 12 12"><g transform="translate(6.60 6.20)"><text x="0" y="2.6" text-anchor="middle" font-size="7.4" font-weight="bold" fill="#4A4636" font-family="Liberation Sans" stroke="#4A4636" stroke-width="0.3">?</text></g></svg>
<div class="r" style="left:262.50px;top:350.80px;width:37.50px;height:12.50px;background:linear-gradient(#FFFFFF,#F2F2F2);border:1px solid #CBCBCB;box-sizing:border-box;border-radius:1.5px;box-shadow:0 0.8px 0.6px rgba(0,0,0,0.18);"></div>
<div class="r" style="left:280.30px;top:351.80px;width:0.80px;height:10.50px;background:#E2E2E2;"></div>
<svg class="r" style="left:266.00px;top:351.00px;" width="12" height="12" viewBox="0 0 12 12"><g transform="translate(6.10 6.00)"><path d="M3.4 0 H-2" stroke="#333" stroke-width="1.3"/><path d="M-3.6 0 L-0.6 -2.6 V2.6 Z" fill="#333"/></g></svg>
<svg class="r" style="left:284.00px;top:351.00px;" width="12" height="12" viewBox="0 0 12 12"><g transform="translate(6.50 6.00)"><path d="M-3.4 0 H2.4 M0.4 -2 L2.8 0 L0.4 2" stroke="#A8A8A8" stroke-width="0.9" fill="none"/></g></svg>
<svg class="r" style="left:305.00px;top:350.00px;" width="12" height="12" viewBox="0 0 12 12"><g transform="translate(6.50 6.80)"><path d="M0 -5 L1.5 -1.6 L5.1 -1.5 L2.3 0.9 L3.2 4.6 L0 2.6 L-3.2 4.6 L-2.3 0.9 L-5.1 -1.5 L-1.5 -1.6 Z" fill="none" stroke="#CFCFCF" stroke-width="0.8" stroke-linejoin="round"/></g></svg>
<div class="t" style="left:322.60px;top:352.00px;font-size:9.45px;color:#1A1A1A;-webkit-text-stroke:0.18px currentColor;transform:scaleY(1.12);transform-origin:0 8.0px;">Справка-расчет земельного налога за 3 квартал 2025 г.</div>
<svg class="r" style="left:848.00px;top:350.00px;" width="12" height="12" viewBox="0 0 12 12"><g transform="translate(6.40 6.00)"><rect x="-4" y="-3.3" width="8" height="6.8" fill="none" stroke="#555" stroke-width="0.8"/><rect x="-2.4" y="-3.3" width="4.8" height="2.4" fill="none" stroke="#555" stroke-width="0.7"/><rect x="-1.8" y="1.2" width="3.6" height="2.2" fill="#555"/></g></svg>
<svg class="r" style="left:864.00px;top:350.00px;" width="12" height="12" viewBox="0 0 12 12"><g transform="translate(6.40 6.00)"><circle r="3.8" fill="none" stroke="#555" stroke-width="0.8"/><rect x="-2" y="-1.6" width="4" height="3" fill="none" stroke="#555" stroke-width="0.6"/></g></svg>
<svg class="r" style="left:878.00px;top:350.00px;" width="12" height="12" viewBox="0 0 12 12"><g transform="translate(6.80 6.00)"><rect x="-3.6" y="-3.6" width="6.6" height="7.2" fill="none" stroke="#555" stroke-width="0.8"/><circle cx="0.4" cy="0.6" r="1.6" fill="none" stroke="#555" stroke-width="0.8"/><path d="M1.6 1.8 L3.8 4" stroke="#555" stroke-width="0.9"/></g></svg>
<svg class="r" style="left:894.00px;top:350.00px;" width="12" height="12" viewBox="0 0 12 12"><g transform="translate(6.80 6.00)"><g transform="rotate(-45)" fill="none" stroke="#5A5A5A" stroke-width="0.85"><rect x="-4.6" y="-1.5" width="5.4" height="3" rx="1.5"/><rect x="-0.8" y="-1.5" width="5.4" height="3" rx="1.5"/></g></g></svg>
<svg class="r" style="left:909.00px;top:349.00px;" width="12" height="12" viewBox="0 0 12 12"><g transform="translate(6.70 6.60)"><g fill="#555"><circle cy="-2.4" r="0.7"/><circle cy="0" r="0.7"/><circle cy="2.4" r="0.7"/></g></g></svg>
<svg class="r" style="left:925.00px;top:349.00px;" width="12" height="12" viewBox="0 0 12 12"><g transform="translate(6.40 6.80)"><path d="M-2.0 -2.0 L2.0 2.0 M2.0 -2.0 L-2.0 2.0" stroke="#555" stroke-width="0.9"/></g></svg>
<div class="r" style="left:262.50px;top:367.40px;width:672.30px;height:16.20px;background:#FAE99C;"></div>
<div class="t" style="left:264.70px;top:372.63px;font-size:6.5px;color:#555;">Период:</div>
<div class="r" style="left:292.40px;top:369.60px;width:77.50px;height:11.60px;background:#FFFFFF;border:1px solid #D0D0D0;box-sizing:border-box;"></div>
<div class="t" style="left:294.00px;top:372.34px;font-size:7.0px;color:#333;">3 квартал 2025 г.</div>
<div class="r" style="left:369.40px;top:369.60px;width:11.00px;height:11.60px;background:linear-gradient(#FFFFFF,#F2F2F2);border:1px solid #CBCBCB;box-sizing:border-box;border-radius:1.5px;box-shadow:0 0.8px 0.6px rgba(0,0,0,0.18);"></div>
<div class="t" style="left:369.40px;top:373.13px;width:11.00px;text-align:center;font-size:6.5px;color:#505050;-webkit-text-stroke:0.03px currentColor;">...</div>
<div class="r" style="left:262.60px;top:388.40px;width:66.00px;height:13.20px;background:#F6D925;border:1px solid #CFB22A;box-sizing:border-box;border-radius:1.5px;box-shadow:0 0.8px 0.6px rgba(0,0,0,0.18);"></div>
<div class="t" style="left:262.60px;top:392.56px;width:66.00px;text-align:center;font-size:6.8px;color:#33320F;-webkit-text-stroke:0.12px currentColor;font-weight:bold;">Сформировать</div>
<div class="r" style="left:333.60px;top:388.60px;width:75.80px;height:12.80px;background:linear-gradient(#FFFFFF,#F2F2F2);border:1px solid #CBCBCB;box-sizing:border-box;border-radius:1.5px;box-shadow:0 0.8px 0.6px rgba(0,0,0,0.18);"></div>
<div class="t" style="left:333.60px;top:392.58px;width:75.80px;text-align:center;font-size:6.75px;color:#505050;-webkit-text-stroke:0.03px currentColor;">Показать настройки</div>
<div class="r" style="left:420.30px;top:388.60px;width:30.50px;height:12.80px;background:linear-gradient(#FFFFFF,#F2F2F2);border:1px solid #CBCBCB;box-sizing:border-box;border-radius:1.5px;box-shadow:0 0.8px 0.6px rgba(0,0,0,0.18);"></div>
<div class="r" style="left:435.40px;top:389.60px;width:0.80px;height:10.80px;background:#E2E2E2;"></div>
<svg class="r" style="left:422.00px;top:389.00px;" width="12" height="12" viewBox="0 0 12 12"><g transform="translate(6.00 6.00)"><circle cx="-0.5" cy="-0.5" r="2.3" fill="none" stroke="#333" stroke-width="1"/><path d="M1.2 1.2 L3 3" stroke="#333" stroke-width="1.2"/></g></svg>
<svg class="r" style="left:437.00px;top:389.00px;" width="12" height="12" viewBox="0 0 12 12"><g transform="translate(6.20 6.00)"><path d="M-3 -1.5 A3.4 3.4 0 0 1 3 -1.5" fill="none" stroke="#555" stroke-width="0.8"/><circle cx="0" cy="0.4" r="1.8" fill="none" stroke="#555" stroke-width="0.8"/><path d="M1.3 1.7 L2.8 3.2" stroke="#555" stroke-width="0.9"/></g></svg>
<div class="r" style="left:461.70px;top:388.60px;width:35.00px;height:12.80px;background:linear-gradient(#FFFFFF,#F2F2F2);border:1px solid #CBCBCB;box-sizing:border-box;border-radius:1.5px;box-shadow:0 0.8px 0.6px rgba(0,0,0,0.18);"></div>
<div class="t" style="left:461.70px;top:392.56px;width:35.00px;text-align:center;font-size:6.8px;color:#505050;-webkit-text-stroke:0.03px currentColor;">Печать</div>
<div class="r" style="left:501.30px;top:388.60px;width:15.40px;height:12.80px;background:linear-gradient(#FFFFFF,#F2F2F2);border:1px solid #CBCBCB;box-sizing:border-box;border-radius:1.5px;box-shadow:0 0.8px 0.6px rgba(0,0,0,0.18);"></div>
<svg class="r" style="left:503.00px;top:389.00px;" width="12" height="12" viewBox="0 0 12 12"><g transform="translate(6.00 6.00)"><rect x="-2.6" y="-3.2" width="5" height="6.2" fill="none" stroke="#555" stroke-width="0.7"/><circle cx="0.2" cy="0.4" r="1.4" fill="none" stroke="#333" stroke-width="0.8"/><path d="M1.2 1.4 L2.8 3" stroke="#333" stroke-width="0.9"/></g></svg>
<div class="r" style="left:527.60px;top:388.60px;width:14.80px;height:12.80px;background:linear-gradient(#FFFFFF,#F2F2F2);border:1px solid #CBCBCB;box-sizing:border-box;border-radius:1.5px;box-shadow:0 0.8px 0.6px rgba(0,0,0,0.18);"></div>
<svg class="r" style="left:529.00px;top:389.00px;" width="12" height="12" viewBox="0 0 12 12"><g transform="translate(6.00 6.00)"><rect x="-3" y="-3" width="6" height="6" fill="#D8DEE8" stroke="#667" stroke-width="0.7"/><rect x="-1.6" y="-3" width="3.2" height="2" fill="#fff" stroke="#667" stroke-width="0.5"/></g></svg>
<div class="r" style="left:547.20px;top:388.20px;width:61.50px;height:13.10px;background:linear-gradient(#FFFFFF,#F2F2F2);border:1px solid #CBCBCB;box-sizing:border-box;border-radius:1.5px;box-shadow:0 0.8px 0.6px rgba(0,0,0,0.18);"></div>
<div class="t" style="left:555.00px;top:391.51px;font-size:6.7px;color:#505050;-webkit-text-stroke:0.03px currentColor;">Регистр учета</div>
<div class="r" style="left:602.20px;top:394.80px;width:2.40px;height:0.90px;background:#444;"></div>
<div class="t" style="left:801.80px;top:390.98px;font-size:9px;color:#6A6A6A;font-family:"Liberation Serif",serif;-webkit-text-stroke:0;">Σ</div>
<div class="r" style="left:815.50px;top:389.00px;width:66.50px;height:12.20px;background:#FFFFFF;border:1px solid #E0E0E0;box-sizing:border-box;"></div>
<div class="t" style="left:815.50px;top:393.33px;font-size:6.5px;color:#333;width:64.20px;text-align:right;">0,00</div>
<div class="r" style="left:904.30px;top:388.20px;width:30.20px;height:13.30px;background:linear-gradient(#FFFFFF,#F2F2F2);border:1px solid #CBCBCB;box-sizing:border-box;border-radius:1.5px;box-shadow:0 0.8px 0.6px rgba(0,0,0,0.18);"></div>
<div class="t" style="left:911.20px;top:391.56px;font-size:6.8px;color:#505050;-webkit-text-stroke:0.03px currentColor;">Еще</div>
<div class="r" style="left:928.60px;top:394.80px;width:2.40px;height:0.90px;background:#444;"></div>
<div class="r" style="left:262.30px;top:406.60px;width:672.20px;height:208.90px;background:#FFFFFF;border:1px solid #CFCFCF;box-sizing:border-box;"></div>
<div class="r" style="left:273.10px;top:406.60px;width:0.90px;height:208.90px;background:#ABABAB;"></div>
<div class="r" style="left:262.30px;top:417.00px;width:672.20px;height:0.80px;background:#C8C8C8;"></div>
<div class="t" style="left:366.40px;top:409.19px;font-size:4.5px;color:#777;-webkit-text-stroke:0.09px currentColor;">¤</div>
<div class="r" style="left:393.20px;top:410.20px;width:136.20px;height:0.70px;background:#BBBBBB;"></div>
<div class="r" style="left:529.20px;top:410.20px;width:0.70px;height:7.00px;background:#BBBBBB;"></div>
<div class="r" style="left:929.10px;top:418.60px;width:3.70px;height:190.00px;background:#8E8E8E;border-radius:1.8px;"></div>
<div class="t" style="left:929.20px;top:610.48px;font-size:4px;color:#AAA;-webkit-text-stroke:0.09px currentColor;">˅</div>
<div class="t" style="left:929.50px;top:411.88px;font-size:4px;color:#999;-webkit-text-stroke:0.09px currentColor;">˄</div>
<div class="r" style="left:273.90px;top:417.60px;width:185.00px;height:9.40px;background:#F3F3F3;border-right:1px solid #F0C870;border-bottom:1px solid #F0C870;box-sizing:border-box;"></div>
<div class="t" style="left:275.40px;top:418.81px;font-size:5.5px;color:#222;-webkit-text-stroke:0.09px currentColor;">Наше будущее</div>
<div class="t" style="left:275.40px;top:425.80px;font-size:6.03px;color:#111;-webkit-text-stroke:0.09px currentColor;font-weight:bold;">Справка-расчет земельного налога за 3 квартал 2025 г.</div>
<div class="r" style="left:273.40px;top:434.50px;width:612.30px;height:34.50px;background:#D5E3CB;"></div>
<div class="r" style="left:273.40px;top:469.00px;width:612.30px;height:13.40px;background:#E4EEDC;"></div>
<div class="r" style="left:273.40px;top:482.40px;width:612.30px;height:6.80px;background:#F2F4F0;"></div>
<div class="r" style="left:273.40px;top:489.20px;width:612.30px;height:6.50px;background:#D5E3CB;"></div>
<div class="r" style="left:273.40px;top:434.15px;width:612.30px;height:0.70px;background:#B8C8B0;"></div>
<div class="r" style="left:273.40px;top:462.85px;width:612.30px;height:0.70px;background:#B8C8B0;"></div>
<div class="r" style="left:273.40px;top:468.65px;width:612.30px;height:0.70px;background:#B8C8B0;"></div>
<div class="r" style="left:273.40px;top:482.05px;width:612.30px;height:0.70px;background:#B8C8B0;"></div>
<div class="r" style="left:273.40px;top:488.85px;width:612.30px;height:0.70px;background:#B8C8B0;"></div>
<div class="r" style="left:273.40px;top:495.35px;width:612.30px;height:0.70px;background:#B8C8B0;"></div>
<div class="r" style="left:273.05px;top:434.50px;width:0.70px;height:61.20px;background:#B8C8B0;"></div>
<div class="r" style="left:285.25px;top:434.50px;width:0.70px;height:34.50px;background:#B8C8B0;"></div>
<div class="r" style="left:285.25px;top:482.40px;width:0.70px;height:6.80px;background:#B8C8B0;"></div>
<div class="r" style="left:343.25px;top:434.50px;width:0.70px;height:34.50px;background:#B8C8B0;"></div>
<div class="r" style="left:343.25px;top:482.40px;width:0.70px;height:6.80px;background:#B8C8B0;"></div>
<div class="r" style="left:392.15px;top:434.50px;width:0.70px;height:61.20px;background:#B8C8B0;"></div>
<div class="r" style="left:424.25px;top:434.50px;width:0.70px;height:61.20px;background:#B8C8B0;"></div>
<div class="r" style="left:457.15px;top:434.50px;width:0.70px;height:61.20px;background:#B8C8B0;"></div>
<div class="r" style="left:489.25px;top:434.50px;width:0.70px;height:61.20px;background:#B8C8B0;"></div>
<div class="r" style="left:529.15px;top:434.50px;width:0.70px;height:61.20px;background:#B8C8B0;"></div>
<div class="r" style="left:569.15px;top:434.50px;width:0.70px;height:61.20px;background:#B8C8B0;"></div>
<div class="r" style="left:601.85px;top:434.50px;width:0.70px;height:61.20px;background:#B8C8B0;"></div>
<div class="r" style="left:633.95px;top:434.50px;width:0.70px;height:61.20px;background:#B8C8B0;"></div>
<div class="r" style="left:666.05px;top:434.50px;width:0.70px;height:61.20px;background:#B8C8B0;"></div>
<div class="r" style="left:701.15px;top:434.50px;width:0.70px;height:61.20px;background:#B8C8B0;"></div>
<div class="r" style="left:749.05px;top:434.50px;width:0.70px;height:61.20px;background:#B8C8B0;"></div>
<div class="r" style="left:808.25px;top:434.50px;width:0.70px;height:61.20px;background:#B8C8B0;"></div>
<div class="r" style="left:839.65px;top:434.50px;width:0.70px;height:61.20px;background:#B8C8B0;"></div>
<div class="r" style="left:885.35px;top:434.50px;width:0.70px;height:61.20px;background:#B8C8B0;"></div>
<div class="r" style="left:885.70px;top:468.65px;width:48.00px;height:0.60px;background:#BBBBBB;"></div>
<div class="t" style="left:273.40px;top:444.92px;font-size:4.5px;color:#575757;-webkit-text-stroke:0.09px currentColor;width:12.20px;text-align:center;">№</div>
<div class="t" style="left:273.40px;top:450.56px;font-size:4.5px;color:#575757;-webkit-text-stroke:0.09px currentColor;width:12.20px;text-align:center;">п/п</div>
<div class="t" style="left:273.40px;top:465.19px;font-size:4.5px;color:#575757;-webkit-text-stroke:0.09px currentColor;width:12.20px;text-align:center;">1</div>
<div class="t" style="left:285.60px;top:447.74px;font-size:4.5px;color:#575757;-webkit-text-stroke:0.09px currentColor;width:58.00px;text-align:center;">ИФНС, Объект</div>
<div class="t" style="left:285.60px;top:465.19px;font-size:4.5px;color:#575757;-webkit-text-stroke:0.09px currentColor;width:58.00px;text-align:center;">2</div>
<div class="t" style="left:343.60px;top:447.74px;font-size:4.5px;color:#575757;-webkit-text-stroke:0.09px currentColor;width:48.90px;text-align:center;">Кадастровый номер</div>
<div class="t" style="left:343.60px;top:465.19px;font-size:4.5px;color:#575757;-webkit-text-stroke:0.09px currentColor;width:48.90px;text-align:center;">3</div>
<div class="t" style="left:392.50px;top:442.09px;font-size:4.5px;color:#575757;-webkit-text-stroke:0.09px currentColor;width:32.10px;text-align:center;">Начало</div>
<div class="t" style="left:392.50px;top:447.74px;font-size:4.5px;color:#575757;-webkit-text-stroke:0.09px currentColor;width:32.10px;text-align:center;">применения</div>
<div class="t" style="left:392.50px;top:453.39px;font-size:4.5px;color:#575757;-webkit-text-stroke:0.09px currentColor;width:32.10px;text-align:center;">сведений</div>
<div class="t" style="left:392.50px;top:465.19px;font-size:4.5px;color:#575757;-webkit-text-stroke:0.09px currentColor;width:32.10px;text-align:center;">6</div>
<div class="t" style="left:424.60px;top:444.92px;font-size:4.5px;color:#575757;-webkit-text-stroke:0.09px currentColor;width:32.90px;text-align:center;">Дата</div>
<div class="t" style="left:424.60px;top:450.56px;font-size:4.5px;color:#575757;-webkit-text-stroke:0.09px currentColor;width:32.90px;text-align:center;">регистрации</div>
<div class="t" style="left:424.60px;top:465.19px;font-size:4.5px;color:#575757;-webkit-text-stroke:0.09px currentColor;width:32.90px;text-align:center;">7</div>
<div class="t" style="left:457.50px;top:444.92px;font-size:4.5px;color:#575757;-webkit-text-stroke:0.09px currentColor;width:32.10px;text-align:center;">Дата снятия</div>
<div class="t" style="left:457.50px;top:450.56px;font-size:4.5px;color:#575757;-webkit-text-stroke:0.09px currentColor;width:32.10px;text-align:center;">с учета</div>
<div class="t" style="left:457.50px;top:465.19px;font-size:4.5px;color:#575757;-webkit-text-stroke:0.09px currentColor;width:32.10px;text-align:center;">8</div>
<div class="t" style="left:489.60px;top:444.92px;font-size:4.5px;color:#575757;-webkit-text-stroke:0.09px currentColor;width:39.90px;text-align:center;">Категория</div>
<div class="t" style="left:489.60px;top:450.56px;font-size:4.5px;color:#575757;-webkit-text-stroke:0.09px currentColor;width:39.90px;text-align:center;">земель (код)</div>
<div class="t" style="left:489.60px;top:465.19px;font-size:4.5px;color:#575757;-webkit-text-stroke:0.09px currentColor;width:39.90px;text-align:center;">9</div>
<div class="t" style="left:529.50px;top:442.09px;font-size:4.5px;color:#575757;-webkit-text-stroke:0.09px currentColor;width:40.00px;text-align:center;">Налоговая база</div>
<div class="t" style="left:529.50px;top:447.74px;font-size:4.5px;color:#575757;-webkit-text-stroke:0.09px currentColor;width:40.00px;text-align:center;">(кадастровая</div>
<div class="t" style="left:529.50px;top:453.39px;font-size:4.5px;color:#575757;-webkit-text-stroke:0.09px currentColor;width:40.00px;text-align:center;">стоимость)</div>
<div class="t" style="left:529.50px;top:465.19px;font-size:4.5px;color:#575757;-webkit-text-stroke:0.09px currentColor;width:40.00px;text-align:center;">10</div>
<div class="t" style="left:569.50px;top:447.74px;font-size:4.5px;color:#575757;-webkit-text-stroke:0.09px currentColor;width:32.70px;text-align:center;">Доля в праве</div>
<div class="t" style="left:569.50px;top:465.19px;font-size:4.5px;color:#575757;-webkit-text-stroke:0.09px currentColor;width:32.70px;text-align:center;">11</div>
<div class="t" style="left:602.20px;top:444.92px;font-size:4.5px;color:#575757;-webkit-text-stroke:0.09px currentColor;width:32.10px;text-align:center;">Налоговая</div>
<div class="t" style="left:602.20px;top:450.56px;font-size:4.5px;color:#575757;-webkit-text-stroke:0.09px currentColor;width:32.10px;text-align:center;">ставка (%)</div>
<div class="t" style="left:602.20px;top:465.19px;font-size:4.5px;color:#575757;-webkit-text-stroke:0.09px currentColor;width:32.10px;text-align:center;">12</div>
<div class="t" style="left:634.30px;top:439.26px;font-size:4.5px;color:#575757;-webkit-text-stroke:0.09px currentColor;width:32.10px;text-align:center;">Количество</div>
<div class="t" style="left:634.30px;top:444.92px;font-size:4.5px;color:#575757;-webkit-text-stroke:0.09px currentColor;width:32.10px;text-align:center;">месяцев</div>
<div class="t" style="left:634.30px;top:450.56px;font-size:4.5px;color:#575757;-webkit-text-stroke:0.09px currentColor;width:32.10px;text-align:center;">владения в</div>
<div class="t" style="left:634.30px;top:456.22px;font-size:4.5px;color:#575757;-webkit-text-stroke:0.09px currentColor;width:32.10px;text-align:center;">году / 12</div>
<div class="t" style="left:634.30px;top:465.19px;font-size:4.5px;color:#575757;-webkit-text-stroke:0.09px currentColor;width:32.10px;text-align:center;">13</div>
<div class="t" style="left:666.40px;top:444.92px;font-size:4.5px;color:#575757;-webkit-text-stroke:0.09px currentColor;width:35.10px;text-align:center;">Повышающий</div>
<div class="t" style="left:666.40px;top:450.56px;font-size:4.5px;color:#575757;-webkit-text-stroke:0.09px currentColor;width:35.10px;text-align:center;">коэффициент</div>
<div class="t" style="left:666.40px;top:465.19px;font-size:4.5px;color:#575757;-webkit-text-stroke:0.09px currentColor;width:35.10px;text-align:center;">14</div>
<div class="t" style="left:701.50px;top:436.44px;font-size:4.5px;color:#575757;-webkit-text-stroke:0.09px currentColor;width:47.90px;text-align:center;">Сумма аванса без</div>
<div class="t" style="left:701.50px;top:442.09px;font-size:4.5px;color:#575757;-webkit-text-stroke:0.09px currentColor;width:47.90px;text-align:center;">льгот</div>
<div class="t" style="left:701.50px;top:447.74px;font-size:4.5px;color:#575757;-webkit-text-stroke:0.09px currentColor;width:47.90px;text-align:center;">(гр. 10 * гр. 11 * гр. 12</div>
<div class="t" style="left:701.50px;top:453.39px;font-size:4.5px;color:#575757;-webkit-text-stroke:0.09px currentColor;width:47.90px;text-align:center;">/ 100 *</div>
<div class="t" style="left:701.50px;top:459.04px;font-size:4.5px;color:#575757;-webkit-text-stroke:0.09px currentColor;width:47.90px;text-align:center;">гр. 13 / 12 * гр. 14 / 4)</div>
<div class="t" style="left:701.50px;top:465.19px;font-size:4.5px;color:#575757;-webkit-text-stroke:0.09px currentColor;width:47.90px;text-align:center;">15</div>
<div class="t" style="left:749.40px;top:447.74px;font-size:4.5px;color:#575757;-webkit-text-stroke:0.09px currentColor;width:59.20px;text-align:center;">Налоговая льгота</div>
<div class="t" style="left:749.40px;top:465.19px;font-size:4.5px;color:#575757;-webkit-text-stroke:0.09px currentColor;width:59.20px;text-align:center;">16</div>
<div class="t" style="left:808.60px;top:442.09px;font-size:4.5px;color:#575757;-webkit-text-stroke:0.09px currentColor;width:31.40px;text-align:center;">Сумма</div>
<div class="t" style="left:808.60px;top:447.74px;font-size:4.5px;color:#575757;-webkit-text-stroke:0.09px currentColor;width:31.40px;text-align:center;">налоговых</div>
<div class="t" style="left:808.60px;top:453.39px;font-size:4.5px;color:#575757;-webkit-text-stroke:0.09px currentColor;width:31.40px;text-align:center;">льгот</div>
<div class="t" style="left:808.60px;top:465.19px;font-size:4.5px;color:#575757;-webkit-text-stroke:0.09px currentColor;width:31.40px;text-align:center;">17</div>
<div class="t" style="left:840.00px;top:436.44px;font-size:4.5px;color:#575757;-webkit-text-stroke:0.09px currentColor;width:45.70px;text-align:center;">Сумма авансового</div>
<div class="t" style="left:840.00px;top:442.09px;font-size:4.5px;color:#575757;-webkit-text-stroke:0.09px currentColor;width:45.70px;text-align:center;">платежа,</div>
<div class="t" style="left:840.00px;top:447.74px;font-size:4.5px;color:#575757;-webkit-text-stroke:0.09px currentColor;width:45.70px;text-align:center;">подлежащая уплате</div>
<div class="t" style="left:840.00px;top:453.39px;font-size:4.5px;color:#575757;-webkit-text-stroke:0.09px currentColor;width:45.70px;text-align:center;">в бюджет</div>
<div class="t" style="left:840.00px;top:459.04px;font-size:4.5px;color:#575757;-webkit-text-stroke:0.09px currentColor;width:45.70px;text-align:center;">(гр. 15 - гр. 17)</div>
<div class="t" style="left:840.00px;top:465.19px;font-size:4.5px;color:#575757;-webkit-text-stroke:0.09px currentColor;width:45.70px;text-align:center;">18</div>
<div class="t" style="left:274.70px;top:470.69px;font-size:5.36px;color:#333;-webkit-text-stroke:0.09px currentColor;">ФНС 7799 КПП 779901001 (Фонд поддержки</div>
<div class="t" style="left:274.70px;top:477.59px;font-size:5.36px;color:#333;-webkit-text-stroke:0.09px currentColor;">образования «Наше будущее»)</div>
<div class="t" style="left:701.50px;top:471.10px;font-size:5.0px;color:#222;-webkit-text-stroke:0.09px currentColor;font-weight:bold;width:46.70px;text-align:right;">37 500</div>
<div class="t" style="left:840.00px;top:471.10px;font-size:5.0px;color:#222;-webkit-text-stroke:0.09px currentColor;font-weight:bold;width:44.50px;text-align:right;">37 500</div>
<div class="t" style="left:273.40px;top:484.82px;font-size:4.45px;color:#333;-webkit-text-stroke:0.09px currentColor;width:10.20px;text-align:right;">1</div>
<div class="t" style="left:285.60px;top:484.82px;font-size:4.45px;color:#333;-webkit-text-stroke:0.09px currentColor;width:58.00px;text-align:center;">Земельный участок</div>
<div class="t" style="left:344.60px;top:484.82px;font-size:4.45px;color:#333;-webkit-text-stroke:0.09px currentColor;">77:14:1203001:6141</div>
<div class="t" style="left:393.70px;top:484.82px;font-size:4.45px;color:#333;-webkit-text-stroke:0.09px currentColor;">01.01.2024</div>
<div class="t" style="left:425.80px;top:484.82px;font-size:4.45px;color:#333;-webkit-text-stroke:0.09px currentColor;">01.01.2024</div>
<div class="t" style="left:490.80px;top:484.82px;font-size:4.45px;color:#333;-webkit-text-stroke:0.09px currentColor;">003002000000</div>
<div class="t" style="left:529.50px;top:484.82px;font-size:4.45px;color:#333;-webkit-text-stroke:0.09px currentColor;width:38.80px;text-align:right;">10 000 000</div>
<div class="t" style="left:569.50px;top:484.82px;font-size:4.45px;color:#333;-webkit-text-stroke:0.09px currentColor;width:31.50px;text-align:right;">1</div>
<div class="t" style="left:602.20px;top:484.82px;font-size:4.45px;color:#333;-webkit-text-stroke:0.09px currentColor;width:30.90px;text-align:right;">1,5</div>
<div class="t" style="left:634.30px;top:484.82px;font-size:4.45px;color:#333;-webkit-text-stroke:0.09px currentColor;width:30.90px;text-align:right;">3</div>
<div class="t" style="left:666.40px;top:484.82px;font-size:4.45px;color:#333;-webkit-text-stroke:0.09px currentColor;width:33.90px;text-align:right;">1</div>
<div class="t" style="left:701.50px;top:484.82px;font-size:4.45px;color:#333;-webkit-text-stroke:0.09px currentColor;width:46.70px;text-align:right;">37 500</div>
<div class="t" style="left:840.00px;top:484.82px;font-size:4.45px;color:#333;-webkit-text-stroke:0.09px currentColor;width:44.50px;text-align:right;">37 500</div>
<div class="t" style="left:274.50px;top:490.57px;font-size:5.4px;color:#222;-webkit-text-stroke:0.09px currentColor;font-weight:bold;">Итого</div>
<div class="t" style="left:701.50px;top:490.80px;font-size:5.0px;color:#222;-webkit-text-stroke:0.09px currentColor;font-weight:bold;width:46.70px;text-align:right;">37 500</div>
<div class="t" style="left:840.00px;top:490.80px;font-size:5.0px;color:#222;-webkit-text-stroke:0.09px currentColor;font-weight:bold;width:44.50px;text-align:right;">37 500</div>
<svg class="r" style="left:260.00px;top:470.00px;" width="12" height="12" viewBox="0 0 12 12"><g transform="translate(6.20 6.00)"><circle r="1.7" fill="#fff" stroke="#999" stroke-width="0.5"/><path d="M-0.9 0 H0.9" stroke="#777" stroke-width="0.5"/></g></svg>
<div class="r" style="left:266.00px;top:477.80px;width:0.60px;height:11.20px;background:#AAAAAA;"></div>
<div class="r" style="left:266.00px;top:488.80px;width:7.00px;height:0.60px;background:#AAAAAA;"></div>
<div class="t" style="left:310.00px;top:508.15px;font-size:4.4px;color:#333;-webkit-text-stroke:0.09px currentColor;">Ответственный</div>
<div class="r" style="left:345.00px;top:515.20px;width:45.00px;height:0.60px;background:#555;"></div>
<div class="t" style="left:345.00px;top:519.21px;font-size:4.3px;color:#333;-webkit-text-stroke:0.09px currentColor;width:45.00px;text-align:center;">(должность)</div>
<div class="r" style="left:419.00px;top:515.20px;width:44.60px;height:0.60px;background:#555;"></div>
<div class="t" style="left:409.00px;top:519.15px;font-size:4.4px;color:#333;-webkit-text-stroke:0.09px currentColor;width:64.60px;text-align:center;">(расшифровка подписи)</div>
</div></body></html>
